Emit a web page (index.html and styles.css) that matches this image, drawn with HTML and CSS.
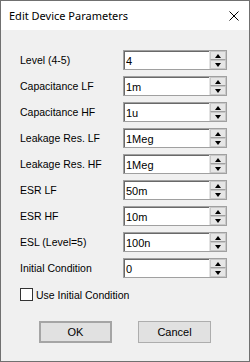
FILE: index.html
```html
<!DOCTYPE html>
<html>

<head>
    <meta charset="utf-8">
    <title>Edit Device Parameters</title>
    <link rel="stylesheet" href="styles.css">
</head>

<body>
    <div class="window">
        <div class="title-bar">
            <span class="title-text">Edit Device Parameters</span>
            <svg class="close-icon" width="10" height="10" viewBox="0 0 10 10">
                <path d="M0.5 0.5 L9.5 9.5 M9.5 0.5 L0.5 9.5" stroke="#000" stroke-width="1" fill="none" />
            </svg>
        </div>
        <div class="content">
            <div class="param-list">
                <div class="param-row">
                    <label class="param-label">Level (4-5)</label>
                    <div class="spin-edit">
                        <input class="spin-input" type="text" value="4">
                        <div class="spin-buttons"><span class="spin-up"></span><span class="spin-down"></span></div>
                    </div>
                </div>
                <div class="param-row">
                    <label class="param-label">Capacitance LF</label>
                    <div class="spin-edit">
                        <input class="spin-input" type="text" value="1m">
                        <div class="spin-buttons"><span class="spin-up"></span><span class="spin-down"></span></div>
                    </div>
                </div>
                <div class="param-row">
                    <label class="param-label">Capacitance HF</label>
                    <div class="spin-edit">
                        <input class="spin-input" type="text" value="1u">
                        <div class="spin-buttons"><span class="spin-up"></span><span class="spin-down"></span></div>
                    </div>
                </div>
                <div class="param-row">
                    <label class="param-label">Leakage Res. LF</label>
                    <div class="spin-edit">
                        <input class="spin-input" type="text" value="1Meg">
                        <div class="spin-buttons"><span class="spin-up"></span><span class="spin-down"></span></div>
                    </div>
                </div>
                <div class="param-row">
                    <label class="param-label">Leakage Res. HF</label>
                    <div class="spin-edit">
                        <input class="spin-input" type="text" value="1Meg">
                        <div class="spin-buttons"><span class="spin-up"></span><span class="spin-down"></span></div>
                    </div>
                </div>
                <div class="param-row">
                    <label class="param-label">ESR LF</label>
                    <div class="spin-edit">
                        <input class="spin-input" type="text" value="50m">
                        <div class="spin-buttons"><span class="spin-up"></span><span class="spin-down"></span></div>
                    </div>
                </div>
                <div class="param-row">
                    <label class="param-label">ESR HF</label>
                    <div class="spin-edit">
                        <input class="spin-input" type="text" value="10m">
                        <div class="spin-buttons"><span class="spin-up"></span><span class="spin-down"></span></div>
                    </div>
                </div>
                <div class="param-row">
                    <label class="param-label">ESL (Level=5)</label>
                    <div class="spin-edit">
                        <input class="spin-input" type="text" value="100n">
                        <div class="spin-buttons"><span class="spin-up"></span><span class="spin-down"></span></div>
                    </div>
                </div>
                <div class="param-row">
                    <label class="param-label">Initial Condition</label>
                    <div class="spin-edit">
                        <input class="spin-input" type="text" value="0">
                        <div class="spin-buttons"><span class="spin-up"></span><span class="spin-down"></span></div>
                    </div>
                </div>
            </div>
            <label class="check-row">
                <span class="check-box"></span>
                <span class="check-label">Use Initial Condition</span>
            </label>
            <div class="button-row">
                <button class="dialog-button default-button">OK</button>
                <button class="dialog-button">Cancel</button>
            </div>
        </div>
    </div>
</body>

</html>
```

FILE: styles.css
```css
* {
    box-sizing: border-box;
}

body {
    margin: 0;
    font-family: "Liberation Sans", Arial, sans-serif;
    font-size: 10.5px;
    color: #000;
}

.window {
    width: 250px;
    height: 362px;
    border: 1px solid #707070;
    background-color: #f0f0f0;
    display: flex;
    flex-direction: column;
}

.title-bar {
    height: 29px;
    background-color: #fff;
    display: flex;
    align-items: center;
    padding: 0 9px 0 8px;
}

.title-text {
    flex: 1;
    font-family: "Noto Sans", "Open Sans", sans-serif;
    font-size: 11px;
    color: #000;
}

.close-icon {
    display: block;
    margin-right: 1px;
}

.content {
    padding: 20px 0 0 19px;
}

.param-list {
    display: flex;
    flex-direction: column;
    gap: 6px;
}

.param-row {
    display: flex;
    align-items: center;
    height: 20px;
}

.param-label {
    width: 103px;
}

.spin-edit {
    display: flex;
    width: 104px;
    height: 20px;
    border: 1px solid #a0a0a0;
    background-color: #fff;
}

.spin-input {
    flex: 1;
    min-width: 0;
    height: 100%;
    margin: 0;
    padding: 0 0 0 1px;
    border: none;
    border-top: 1px solid #696969;
    border-left: 1px solid #696969;
    outline: none;
    font-family: "Liberation Sans", Arial, sans-serif;
    font-size: 11px;
    color: #000;
    background-color: #fff;
}

.spin-buttons {
    width: 17px;
    display: flex;
    flex-direction: column;
    border-left: 1px solid #e3e3e3;
    background-color: #e6e6e6;
}

.spin-up,
.spin-down {
    flex: 1;
    display: flex;
    align-items: center;
    justify-content: center;
    border: 1px solid #c8c8c8;
}

.spin-up {
    border-bottom-color: #a0a0a0;
}

.spin-up::after,
.spin-down::after {
    content: "";
    border-left: 3.5px solid transparent;
    border-right: 3.5px solid transparent;
}

.spin-up::after {
    border-bottom: 4px solid #000;
}

.spin-down::after {
    border-top: 4px solid #000;
}

.check-row {
    display: flex;
    align-items: center;
    gap: 3px;
    margin-top: 10px;
    height: 13px;
}

.check-box {
    width: 13px;
    height: 13px;
    border: 1px solid #333;
    background-color: #fff;
}

.button-row {
    display: flex;
    gap: 26px;
    margin-top: 20px;
    padding-left: 19px;
}

.dialog-button {
    width: 73px;
    height: 22px;
    margin: 0;
    border: 1px solid #adadad;
    background-color: #e1e1e1;
    font-family: "Liberation Sans", Arial, sans-serif;
    font-size: 11px;
    color: #000;
    padding: 0;
}

.default-button {
    border: 2px solid #a5a5a5;
}
```
